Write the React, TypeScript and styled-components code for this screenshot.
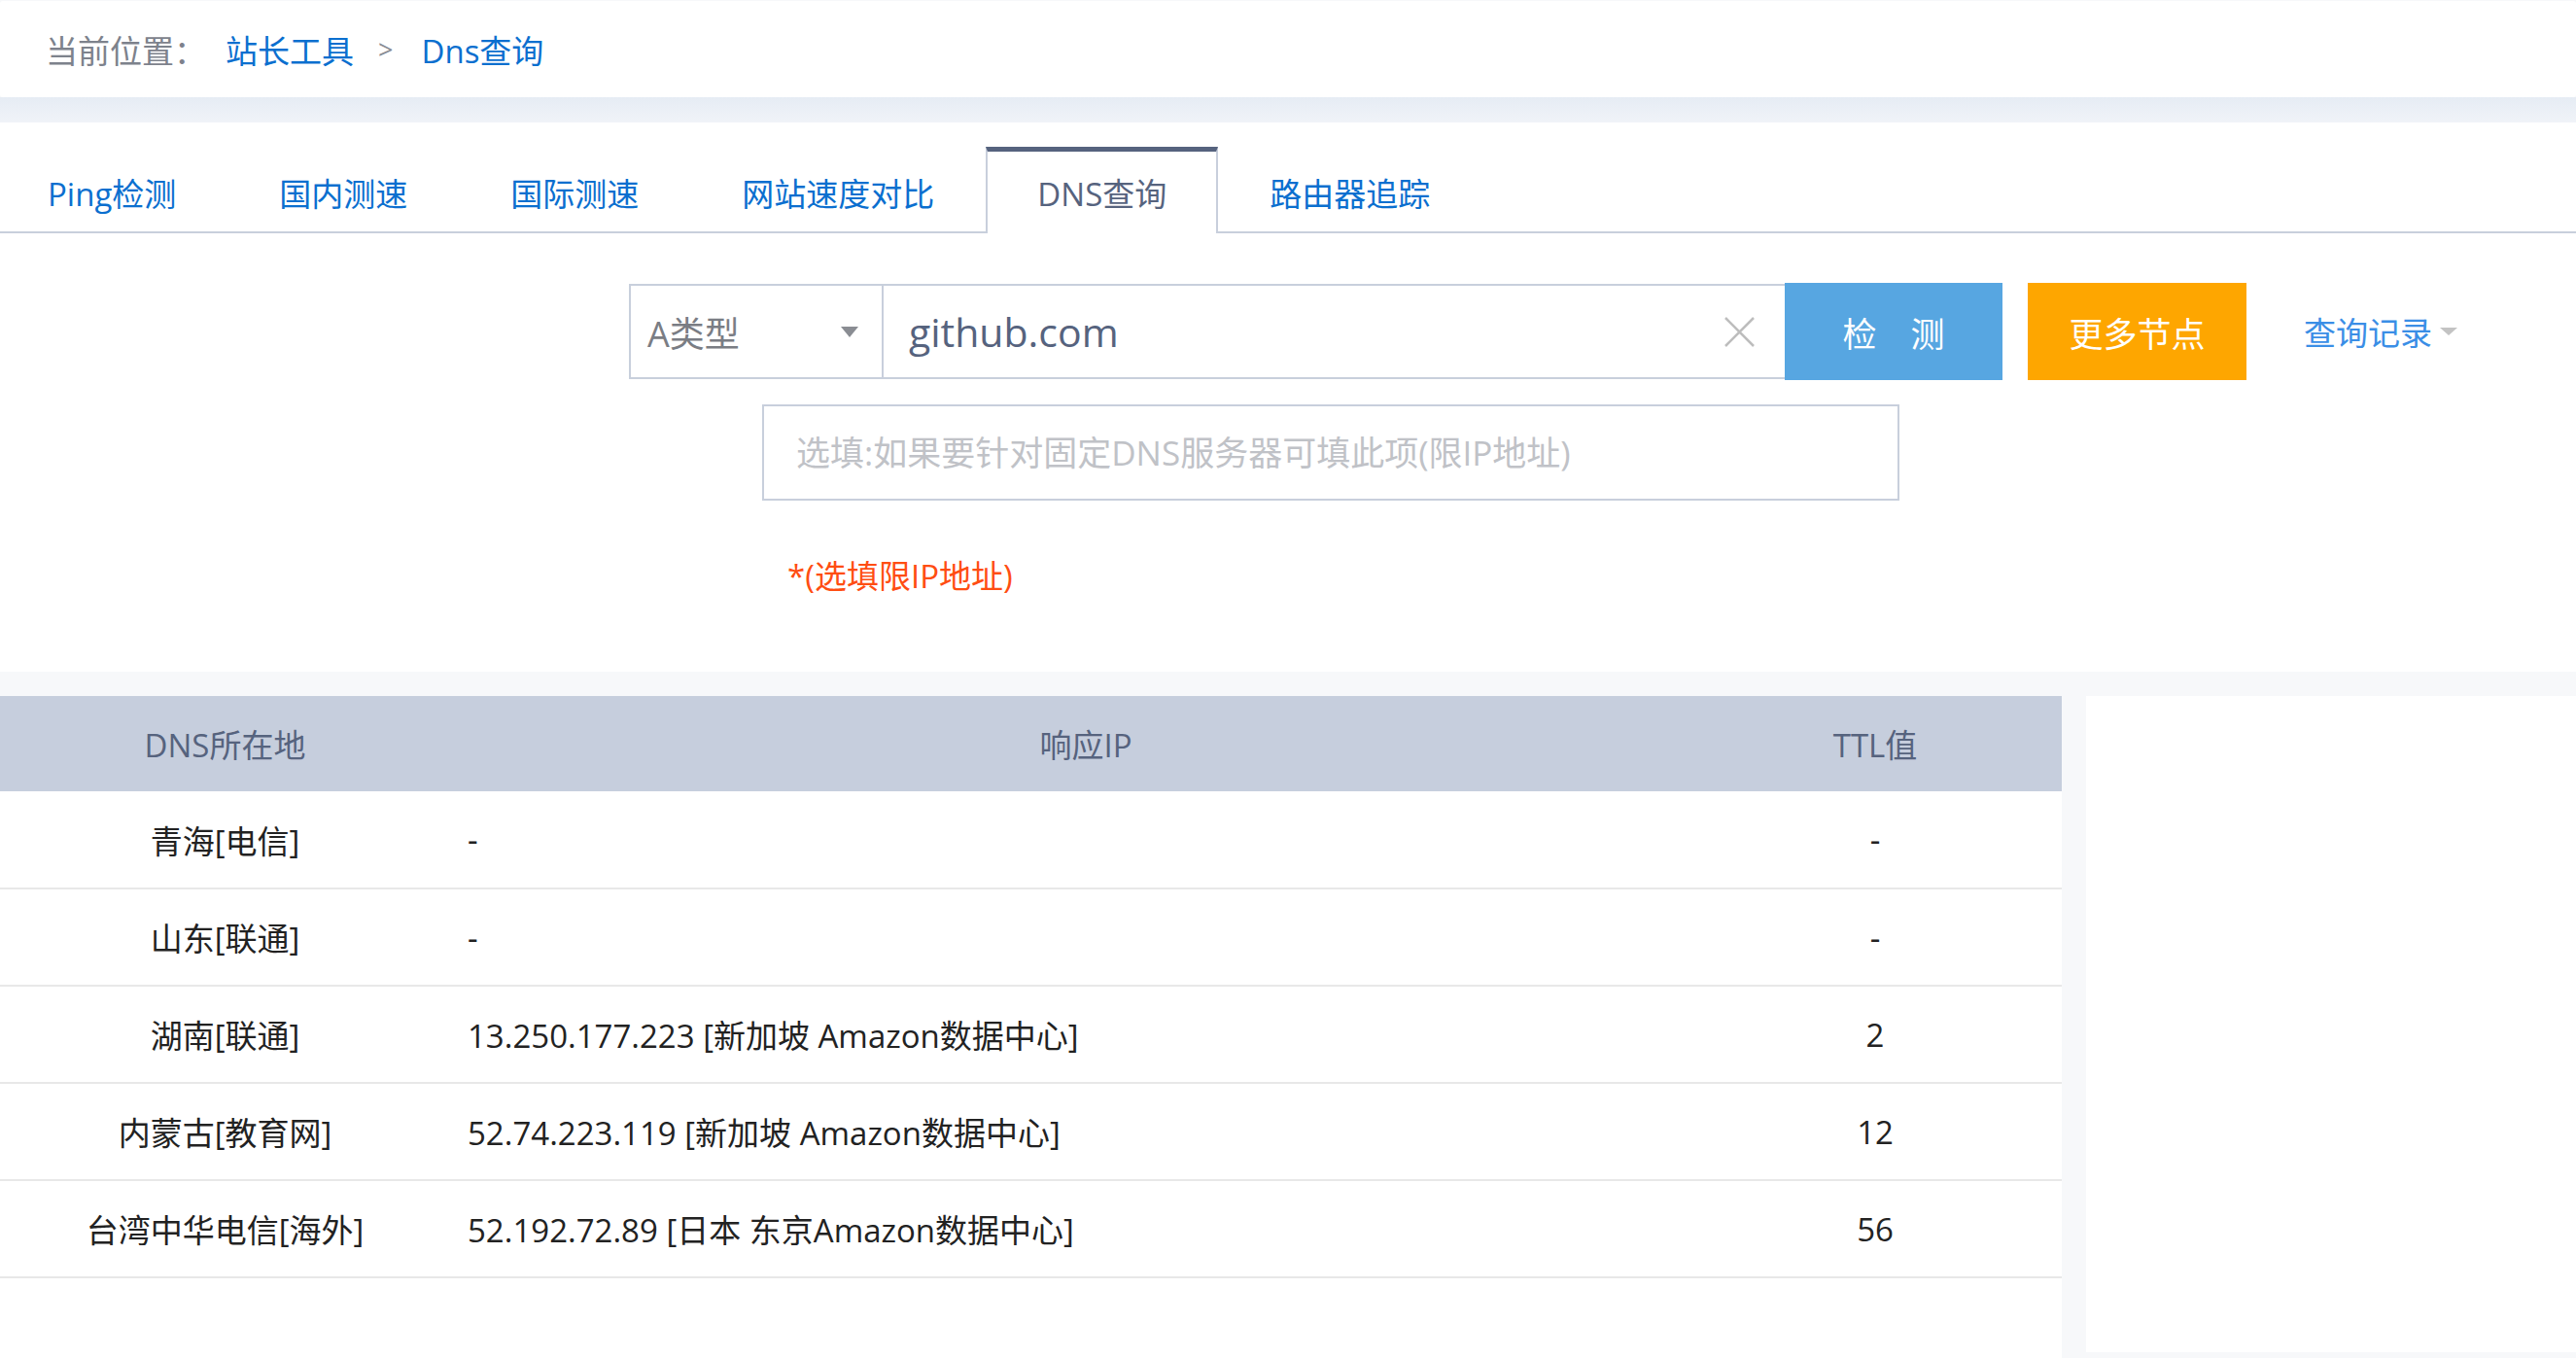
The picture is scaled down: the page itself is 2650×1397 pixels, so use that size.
import React from "react";
import styled, { createGlobalStyle } from "styled-components";

const GlobalStyle = createGlobalStyle`
  html, body { margin: 0; padding: 0; }
  body {
    background: #f7f8fa;
    font-family: "Open Sans", "Noto Sans CJK SC", sans-serif;
    color: #222;
  }
  * { box-sizing: border-box; }
`;

const Page = styled.div`
  width: 2650px;
  min-height: 1397px;
  display: flex;
  flex-direction: column;
`;

const Breadcrumb = styled.nav`
  margin-top: 1px;
  height: 99px;
  background: #fff;
  border-radius: 3px;
  display: flex;
  align-items: center;
  padding-left: 47px;
  font-size: 33px;
`;

const CrumbLabel = styled.span`
  color: #7d828c;
`;

const CrumbLink = styled.a<{ $first?: boolean }>`
  color: #0b6fcf;
  text-decoration: none;
  margin-left: ${(p) => (p.$first ? "20px" : "0")};
`;

const CrumbSep = styled.span`
  color: #888c94;
  font-size: 27px;
  margin: 0 29px 0 25px;
`;

const Band = styled.div`
  height: 26px;
  background: linear-gradient(#e6ecf4, #f0f3f8);
`;

const MainPanel = styled.section`
  background: #fff;
  height: 565px;
`;

const TabBar = styled.div`
  display: flex;
  padding-top: 25px;
  padding-left: 0;
  margin-left: -4px;
  border-bottom: 2px solid #c8cfdc;
  height: 114px;
`;

const Tab = styled.div<{ $active?: boolean }>`
  height: 89px;
  margin-bottom: -2px;
  padding: 0 51px;
  display: flex;
  align-items: center;
  font-size: 33px;
  border-top: 5px solid ${(p) => (p.$active ? "#56637e" : "transparent")};
  border-left: 2px solid ${(p) => (p.$active ? "#c8cfdc" : "transparent")};
  border-right: 2px solid ${(p) => (p.$active ? "#c8cfdc" : "transparent")};
  background: ${(p) => (p.$active ? "#fff" : "transparent")};
  color: ${(p) => (p.$active ? "#56637e" : "#0b6fcf")};
  white-space: nowrap;
`;

const Form = styled.div`
  padding-top: 51px;
`;

const SearchRow = styled.div`
  display: flex;
  align-items: center;
  margin-left: 647px;
  height: 100px;
`;

const SelectBox = styled.div`
  width: 262px;
  height: 98px;
  border: 2px solid #c8cfdc;
  display: flex;
  align-items: center;
  justify-content: space-between;
  padding: 0 24px 0 17px;
  font-size: 36px;
  color: #7a7d84;
`;

const DomainField = styled.div`
  width: 927px;
  height: 98px;
  border-top: 2px solid #c8cfdc;
  border-bottom: 2px solid #c8cfdc;
  display: flex;
  align-items: center;
  padding: 0 31px 0 26px;
`;

const DomainInput = styled.input`
  flex: 1;
  border: none;
  outline: none;
  background: transparent;
  font-family: inherit;
  font-size: 41px;
  color: #56637e;
  padding: 0;
`;

const Button = styled.button<{ $tone: "blue" | "orange"; $gap?: number }>`
  height: 100px;
  width: ${(p) => (p.$tone === "blue" ? "224px" : "225px")};
  margin-left: ${(p) => p.$gap ?? 0}px;
  border: none;
  background: ${(p) => (p.$tone === "blue" ? "#57a6e1" : "#fea600")};
  color: #fff;
  font-family: inherit;
  font-size: 35px;
  padding: 0;
  display: flex;
  align-items: center;
  justify-content: center;
`;

const HistoryLink = styled.a`
  margin-left: 59px;
  display: flex;
  align-items: center;
  gap: 8px;
  font-size: 33px;
  color: #3a8ee6;
  text-decoration: none;
`;

const ServerInput = styled.input`
  display: block;
  margin: 25px 0 0 784px;
  width: 1170px;
  height: 99px;
  border: 2px solid #c8cfdc;
  outline: none;
  padding: 0 0 0 33px;
  font-family: inherit;
  font-size: 35px;
  color: #56637e;
  &::placeholder {
    color: #c0c2c7;
  }
`;

const Note = styled.div`
  margin: 56px 0 0 810px;
  font-size: 33px;
  line-height: 44px;
  color: #ff4d12;
`;

const Strip = styled.div`
  height: 25px;
`;

const Bottom = styled.div`
  display: flex;
  align-items: flex-start;
  gap: 25px;
  flex: 1;
`;

const TablePanel = styled.section`
  width: 2121px;
  min-height: 681px;
  background: #fff;
`;

const SidePanel = styled.aside`
  flex: 1;
  height: 675px;
  background: #fff;
`;

const Table = styled.table`
  width: 2121px;
  border-collapse: collapse;
  table-layout: fixed;
`;

const HeadCell = styled.th<{ $w: number; $pl?: number }>`
  width: ${(p) => p.$w}px;
  height: 98px;
  padding: 0 0 0 ${(p) => p.$pl ?? 0}px;
  background: #c6cedd;
  color: #56637e;
  font-weight: normal;
  font-size: 33px;
  text-align: center;
`;

const Row = styled.tr`
  border-bottom: 2px solid #e8e8e8;
`;

const Cell = styled.td<{ $align?: "left" | "center" }>`
  height: 100px;
  padding: 0 0 0 ${(p) => (p.$align === "left" ? "18px" : "0")};
  text-align: ${(p) => p.$align ?? "center"};
  font-size: 33px;
  color: #222;
  white-space: nowrap;
`;

const tabs = ["Ping检测", "国内测速", "国际测速", "网站速度对比", "DNS查询", "路由器追踪"];

const rows = [
  { loc: "青海[电信]", ip: "-", ttl: "-" },
  { loc: "山东[联通]", ip: "-", ttl: "-" },
  { loc: "湖南[联通]", ip: "13.250.177.223 [新加坡 Amazon数据中心]", ttl: "2" },
  { loc: "内蒙古[教育网]", ip: "52.74.223.119 [新加坡 Amazon数据中心]", ttl: "12" },
  { loc: "台湾中华电信[海外]", ip: "52.192.72.89 [日本 东京Amazon数据中心]", ttl: "56" },
];

const Caret = ({ color, w, h }: { color: string; w: number; h: number }) => (
  <svg width={w} height={h} viewBox={`0 0 ${w} ${h}`}>
    <polygon points={`0,0 ${w},0 ${w / 2},${h}`} fill={color} />
  </svg>
);

const ClearIcon = () => (
  <svg width="31" height="31" viewBox="0 0 31 31">
    <path d="M1 1 L30 30 M30 1 L1 30" stroke="#bdbdbd" strokeWidth="2.5" fill="none" />
  </svg>
);

export default function App() {
  return (
    <Page>
      <GlobalStyle />
      <Breadcrumb>
        <CrumbLabel>当前位置：</CrumbLabel>
        <CrumbLink $first>站长工具</CrumbLink>
        <CrumbSep>&gt;</CrumbSep>
        <CrumbLink>Dns查询</CrumbLink>
      </Breadcrumb>
      <Band />
      <MainPanel>
        <TabBar>
          {tabs.map((t) => (
            <Tab key={t} $active={t === "DNS查询"}>
              {t}
            </Tab>
          ))}
        </TabBar>
        <Form>
          <SearchRow>
            <SelectBox>
              <span>A类型</span>
              <Caret color="#8a8d93" w={18} h={11} />
            </SelectBox>
            <DomainField>
              <DomainInput defaultValue="github.com" />
              <ClearIcon />
            </DomainField>
            <Button $tone="blue">检　测</Button>
            <Button $tone="orange" $gap={26}>
              更多节点
            </Button>
            <HistoryLink>
              查询记录
              <Caret color="#c3c3c3" w={18} h={8} />
            </HistoryLink>
          </SearchRow>
          <ServerInput placeholder="选填:如果要针对固定DNS服务器可填此项(限IP地址)" />
          <Note>*(选填限IP地址)</Note>
        </Form>
      </MainPanel>
      <Strip />
      <Bottom>
        <TablePanel>
          <Table>
            <thead>
              <tr>
                <HeadCell $w={463}>DNS所在地</HeadCell>
                <HeadCell $w={1274} $pl={34}>
                  响应IP
                </HeadCell>
                <HeadCell $w={384}>TTL值</HeadCell>
              </tr>
            </thead>
            <tbody>
              {rows.map((r) => (
                <Row key={r.loc}>
                  <Cell>{r.loc}</Cell>
                  <Cell $align="left">{r.ip}</Cell>
                  <Cell>{r.ttl}</Cell>
                </Row>
              ))}
            </tbody>
          </Table>
        </TablePanel>
        <SidePanel />
      </Bottom>
    </Page>
  );
}
